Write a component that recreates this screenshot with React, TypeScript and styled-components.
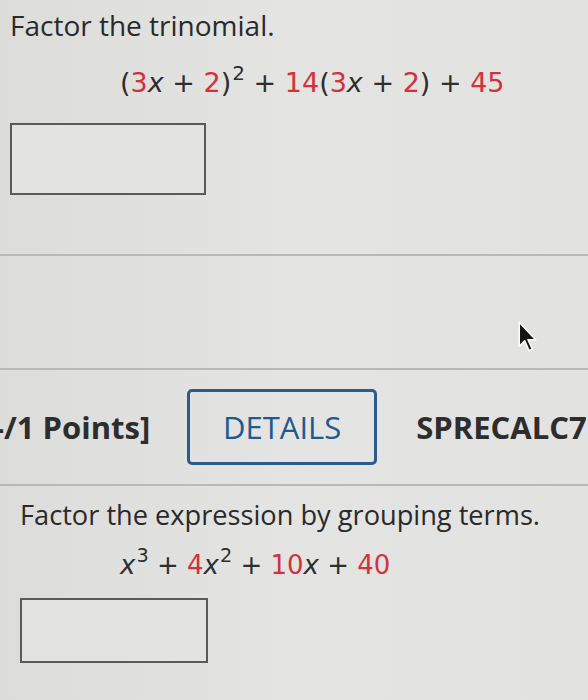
import styled, { createGlobalStyle } from 'styled-components';

const GlobalStyle = createGlobalStyle`
  html, body {
    margin: 0;
    padding: 0;
    background: #e1e1df;
  }
  body {
    width: 588px;
    height: 700px;
    overflow: hidden;
    font-family: "Open Sans", "DejaVu Sans", sans-serif;
    color: #2b2b2b;
  }
`

const Page = styled.div`
  position: relative;
  width: 588px;
  height: 700px;
  overflow: hidden;
  background: linear-gradient(90deg, #dcdcda 0%, #e4e4e2 50%, #e2e2e0 100%);
`

const Question = styled.section<{ $pad: number }>`
  padding-left: ${props => props.$pad}px;
`

const Prompt = styled.p<{ $top: number; $size: number }>`
  margin: 0;
  padding-top: ${props => props.$top}px;
  font-size: ${props => props.$size}px;
  line-height: 34px;
  color: #2a2a2a;
  white-space: nowrap;
`

const Expression = styled.p<{ $left: number; $top: number; $size: number }>`
  margin: 0;
  padding-top: ${props => props.$top}px;
  padding-left: ${props => props.$left}px;
  font-family: "DejaVu Sans", Verdana, sans-serif;
  font-size: ${props => props.$size}px;
  line-height: 34px;
  color: #2e2e2e;
  white-space: nowrap;
`

const Num = styled.span`
  color: #d2323c;
`

const Var = styled.i`
  font-style: italic;
`

const Sup = styled.sup`
  font-size: 0.74em;
  vertical-align: 0.6em;
  line-height: 0;
  padding-left: 1px;
`

const AnswerBox = styled.div<{ $top: number; $w: number; $h: number }>`
  margin-top: ${props => props.$top}px;
  width: ${props => props.$w}px;
  height: ${props => props.$h}px;
  box-sizing: border-box;
  border: 2px solid #5a5a5a;
  background: #e3e3e1;
`

const Divider = styled.hr<{ $top: number }>`
  margin: ${props => props.$top}px 0 0;
  border: none;
  border-top: 2px solid #b9b9b7;
`

const Header = styled.div`
  display: flex;
  align-items: center;
  height: 114px;
  white-space: nowrap;
`

const Points = styled.span`
  margin-left: -6px;
  font-size: 31px;
  font-weight: 700;
  color: #2d2d2d;
`

const DetailsButton = styled.button`
  margin-left: 37px;
  width: 190px;
  height: 76px;
  flex-shrink: 0;
  box-sizing: border-box;
  border: 3px solid #2b5b8d;
  border-radius: 5px;
  background: transparent;
  font-family: "Open Sans", "DejaVu Sans", sans-serif;
  font-size: 31px;
  font-weight: 500;
  color: #1e5a90;
`

const Source = styled.span`
  margin-left: 39px;
  font-size: 31px;
  font-weight: 700;
  color: #2d2d2d;
`

const Cursor = styled.svg`
  position: absolute;
  left: 517px;
  top: 321px;
`

export default function App() {
  return (
    <Page>
      <GlobalStyle />
      <Question $pad={10}>
        <Prompt $top={8} $size={28}>Factor the trinomial.</Prompt>
        <Expression $left={110} $top={24} $size={27}>
          (<Num>3</Num><Var>x</Var> + <Num>2</Num>)<Sup>2</Sup> + <Num>14</Num>(<Num>3</Num><Var>x</Var> + <Num>2</Num>) + <Num>45</Num>
        </Expression>
        <AnswerBox $top={23} $w={196} $h={72} />
      </Question>
      <Divider $top={59} />
      <Divider $top={112} />
      <Header>
        <Points>-/1 Points]</Points>
        <DetailsButton>DETAILS</DetailsButton>
        <Source>SPRECALC7</Source>
      </Header>
      <Divider $top={0} />
      <Question $pad={20}>
        <Prompt $top={12} $size={27.2}>Factor the expression by grouping terms.</Prompt>
        <Expression $left={100} $top={16} $size={26}>
          <Var>x</Var><Sup>3</Sup> + <Num>4</Num><Var>x</Var><Sup>2</Sup> + <Num>10</Num><Var>x</Var> + <Num>40</Num>
        </Expression>
        <AnswerBox $top={16} $w={188} $h={65} />
      </Question>
      <Cursor width="22" height="32" viewBox="0 0 20 29">
        <path d="M2 1 L2 23 L7 18 L11 27 L14 25.5 L10 17 L17 17 Z" fill="#151515" stroke="#fafafa" strokeWidth="1.5" strokeLinejoin="round" />
      </Cursor>
    </Page>
  );
}
